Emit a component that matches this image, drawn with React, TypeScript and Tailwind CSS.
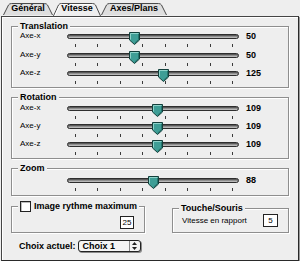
import React from "react";

const BOLD = "font-['Liberation_Sans',Arial,sans-serif] font-bold text-[9px] text-black";
const REG = "font-['Liberation_Sans',Arial,sans-serif] text-[8px] text-black";

function Tab({ label, width, active }: { label: string; width: number; active?: boolean }) {
  const w = width;
  const h = active ? 13 : 12;
  const d = `M0.5,${h} L5.5,2 Q6.5,0.5 8.5,0.5 L${w - 8.5},0.5 Q${w - 6.5},0.5 ${w - 5.5},2 L${w - 0.5},${h}`;
  return (
    <div className={`relative ${active ? "z-10 h-[13px]" : "h-[12px]"}`} style={{ width: w }}>
      <svg className="absolute left-0 top-0" width={w} height={h} viewBox={`0 0 ${w} ${h}`}>
        <path d={d + " Z"} fill={active ? "#eeeeee" : "#dedede"} stroke="none" />
        <path d={d} fill="none" stroke="#4a4a4a" strokeWidth="1" />
        {active && (
          <path d={`M1.7,${h} L6.5,2.6 Q7.3,1.5 8.5,1.5 L${w - 8.5},1.5`} fill="none" stroke="#ffffff" strokeWidth="1" />
        )}
      </svg>
      <div className={`relative text-center leading-[11px] ${BOLD}`}>{label}</div>
    </div>
  );
}

function Thumb() {
  return (
    <svg width="11" height="13" viewBox="0 0 11 13">
      <path d="M0.5,0.5 L10.5,0.5 L10.5,8 L5.5,12.5 L0.5,8 Z" fill="#3e9e96" stroke="#123f3b" strokeWidth="1" />
      <path d="M1.5,7.5 L1.5,1.5 L9.5,1.5" fill="none" stroke="#8fd3ca" strokeWidth="1" />
      <path d="M9.5,2 L9.5,7.6 L5.5,11.2" fill="none" stroke="#24746d" strokeWidth="1" />
    </svg>
  );
}

function Slider({ thumb }: { thumb: number }) {
  const ticks = [0, 1, 2, 3, 4, 5, 6, 7];
  return (
    <div className="relative h-[20px] w-[172px]">
      <div className="mt-[7px] h-[5px] rounded-full border border-[#2e2e2e] bg-[#8f8f8f] shadow-[inset_0_1px_0_#5a5a5a,inset_0_-1px_0_#b8b8b8]" />
      <div className="ml-[8px] mt-[5px] flex w-[158px] justify-between">
        {ticks.map((i) => (
          <div key={i} className="h-[3px] w-px bg-[#3a3a3a]" />
        ))}
      </div>
      <div className="absolute top-[5px]" style={{ left: thumb - 5.5 }}>
        <Thumb />
      </div>
    </div>
  );
}

function SliderRow({ label, value, thumb, h }: { label?: string; value: string; thumb: number; h: string }) {
  return (
    <div className={`flex ${h}`}>
      <div className={`ml-[8px] h-[18px] w-[47px] leading-[18px] ${REG}`}>{label}</div>
      <Slider thumb={thumb} />
      <div className={`ml-[7px] h-[18px] leading-[18px] ${BOLD}`}>{value}</div>
    </div>
  );
}

function Group({ title, className, children }: { title: React.ReactNode; className: string; children?: React.ReactNode }) {
  return (
    <div className={`relative border border-[#8e8e8e] shadow-[1px_1px_0_#ffffff,inset_1px_1px_0_#ffffff] ${className}`}>
      <div className={`absolute -top-[7px] left-[6px] bg-[#eeeeee] px-[2px] leading-[12px] ${BOLD}`}>{title}</div>
      {children}
    </div>
  );
}

export default function App() {
  return (
    <div className="h-[261px] w-[300px] overflow-hidden bg-[#eeeeee] pt-[3px]">
      <div className="ml-[3px] flex">
        <Tab label="Général" width={50} />
        <Tab label="Vitesse" width={48} active />
        <Tab label="Axes/Plans" width={66} />
      </div>
      <div className="relative ml-[1px] h-[245px] w-[298px] border border-[#444444] border-r-[#2a2a2a] border-b-[#2a2a2a] bg-[#eeeeee] pl-[9px] pt-[9px] shadow-[inset_1px_1px_0_#ffffff,1px_1px_0_#9a9a9a]">
        <Group title="Translation" className="h-[62px] w-[278px]">
          <SliderRow label="Axe-x" value="50" thumb={67} h="h-[19px]" />
          <SliderRow label="Axe-y" value="50" thumb={67} h="h-[18px]" />
          <SliderRow label="Axe-z" value="125" thumb={96} h="h-[18px]" />
        </Group>
        <Group title="Rotation" className="mt-[9px] h-[62px] w-[278px] pt-[1px]">
          <SliderRow label="Axe-x" value="109" thumb={90} h="h-[18px]" />
          <SliderRow label="Axe-y" value="109" thumb={90} h="h-[18px]" />
          <SliderRow label="Axe-z" value="109" thumb={90} h="h-[18px]" />
        </Group>
        <Group title="Zoom" className="mt-[9px] h-[28px] w-[278px] pt-[2px]">
          <SliderRow value="88" thumb={86} h="h-[18px]" />
        </Group>
        <div className="mt-[10px] flex items-start">
          <Group
            title={
              <span className="flex items-center gap-[3px]">
                <span className="h-[11px] w-[11px] border border-[#222] bg-white shadow-[inset_1px_1px_0_#bbbbbb]" />
                <span>Image rythme maximum</span>
              </span>
            }
            className="h-[27px] w-[134px]"
          >
            <div className="flex justify-end pr-[10px] pt-[9px]">
              <div className={`flex h-[13px] w-[14px] items-center justify-center border border-[#222] bg-white ${REG}`}>25</div>
            </div>
          </Group>
          <Group title="Touche/Souris" className="ml-[27px] mt-[2px] h-[25px] w-[117px]">
            <div className="flex items-center pl-[9px] pr-[10px] pt-[5px]">
              <div className={`flex-1 ${REG}`}>Vitesse en rapport</div>
              <div className={`flex h-[13px] w-[15px] items-center justify-center border border-[#222] bg-white ${REG}`}>5</div>
            </div>
          </Group>
        </div>
        <div className="ml-[8px] mt-[7px] flex items-center">
          <div className={`${BOLD} leading-[12px]`}>Choix actuel:</div>
          <div className="ml-[2px] flex h-[12px] w-[63px] items-center rounded-[3px] border border-[#222] bg-[#f4f4f4] shadow-[1px_1px_0_#8a8a8a]">
            <div className={`flex-1 pl-[4px] leading-[10px] ${BOLD}`}>Choix 1</div>
            <div className="flex h-full w-[11px] items-center justify-center border-l border-[#888]">
              <svg width="5" height="8" viewBox="0 0 5 8">
                <path d="M2.5,0 L5,3 L0,3 Z" fill="#222" />
                <path d="M2.5,8 L5,5 L0,5 Z" fill="#222" />
              </svg>
            </div>
          </div>
        </div>
      </div>
    </div>
  );
}
